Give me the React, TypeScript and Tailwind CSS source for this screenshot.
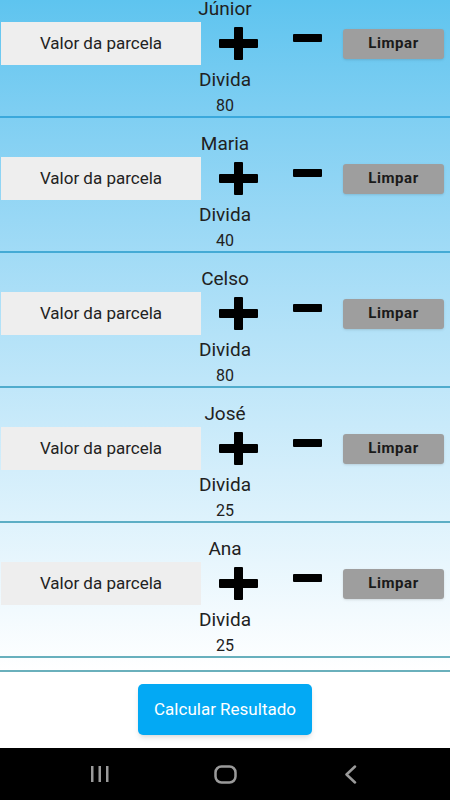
import React from "react";

const pessoas = [
  { nome: "Júnior", divida: 80, borda: "border-[#3aa8dc]" },
  { nome: "Maria", divida: 40, borda: "border-[#45aad5]" },
  { nome: "Celso", divida: 80, borda: "border-[#50accd]" },
  { nome: "José", divida: 25, borda: "border-[#5caec5]" },
  { nome: "Ana", divida: 25, borda: "border-[#68b0bd]" },
];

const Plus = () => (
  <svg width="39" height="33" viewBox="0 0 39 33">
    <rect x="0" y="12" width="39" height="9" rx="1" fill="#000" />
    <rect x="15" y="0" width="9" height="33" rx="1" fill="#000" />
  </svg>
);

const Minus = () => (
  <svg width="29" height="8" viewBox="0 0 29 8">
    <rect x="0" y="0" width="29" height="8" rx="1" fill="#000" />
  </svg>
);

const Linha = ({ nome, divida, borda }: { nome: string; divida: number; borda: string }) => (
  <div className={`flex flex-col items-center h-[135px] border-b-2 ${borda}`}>
    <span className="mt-[14px] h-[24px] leading-[24px] text-[19px] text-[#212121]">{nome}</span>
    <div className="mt-[1px] flex items-center w-full h-[43px]">
      <div className="ml-[1px] w-[200px] h-[43px] bg-[#eeeeee] flex items-center justify-center text-[17px] text-[#222]">
        Valor da parcela
      </div>
      <div className="w-[74px] flex justify-center">
        <Plus />
      </div>
      <div className="w-[65px] flex justify-center -mt-[12px]">
        <Minus />
      </div>
      <button className="ml-[3px] w-[101px] h-[30px] bg-[#9e9e9e] rounded-[3px] shadow-sm text-[15px] font-bold tracking-[0.6px] text-[#1a1a1a]">
        Limpar
      </button>
    </div>
    <span className="mt-[3px] h-[24px] leading-[24px] text-[19px] text-[#212121]">Divida</span>
    <span className="mt-[4px] h-[20px] leading-[20px] text-[16px] text-[#212121]">{divida}</span>
  </div>
);

export default function App() {
  return (
    <div className="w-[450px] h-[800px] flex flex-col overflow-hidden font-['Roboto',sans-serif]">
      <div className="h-[670px] overflow-hidden bg-linear-to-b from-[#5ec4ef] to-white">
        <div className="-mt-[17px]">
          {pessoas.map(p => (
            <Linha key={p.nome} {...p} />
          ))}
        </div>
      </div>
      <div className="h-[78px] bg-white border-t-2 border-[#6ab0bc] flex justify-center pt-[12px]">
        <button className="w-[174px] h-[51px] bg-[#03a9f4] rounded-[5px] shadow-md text-white text-[17px]">
          Calcular Resultado
        </button>
      </div>
      <div className="h-[52px] bg-black flex items-center">
        <div className="w-[200px] flex justify-center">
          <svg width="20" height="16" viewBox="0 0 20 16">
            <rect x="1" y="0" width="2.5" height="16" fill="#9a9a9a" />
            <rect x="8.5" y="0" width="2.5" height="16" fill="#9a9a9a" />
            <rect x="16" y="0" width="2.5" height="16" fill="#9a9a9a" />
          </svg>
        </div>
        <div className="w-[50px] flex justify-center">
          <svg width="23" height="19" viewBox="0 0 23 19">
            <rect x="1.5" y="1.5" width="20" height="16" rx="6" fill="none" stroke="#9a9a9a" strokeWidth="2.5" />
          </svg>
        </div>
        <div className="w-[200px] flex justify-center">
          <svg width="13" height="19" viewBox="0 0 13 19">
            <path d="M11 1.5 L2.5 9.5 L11 17.5" fill="none" stroke="#9a9a9a" strokeWidth="2.5" strokeLinecap="round" strokeLinejoin="round" />
          </svg>
        </div>
      </div>
    </div>
  );
}
